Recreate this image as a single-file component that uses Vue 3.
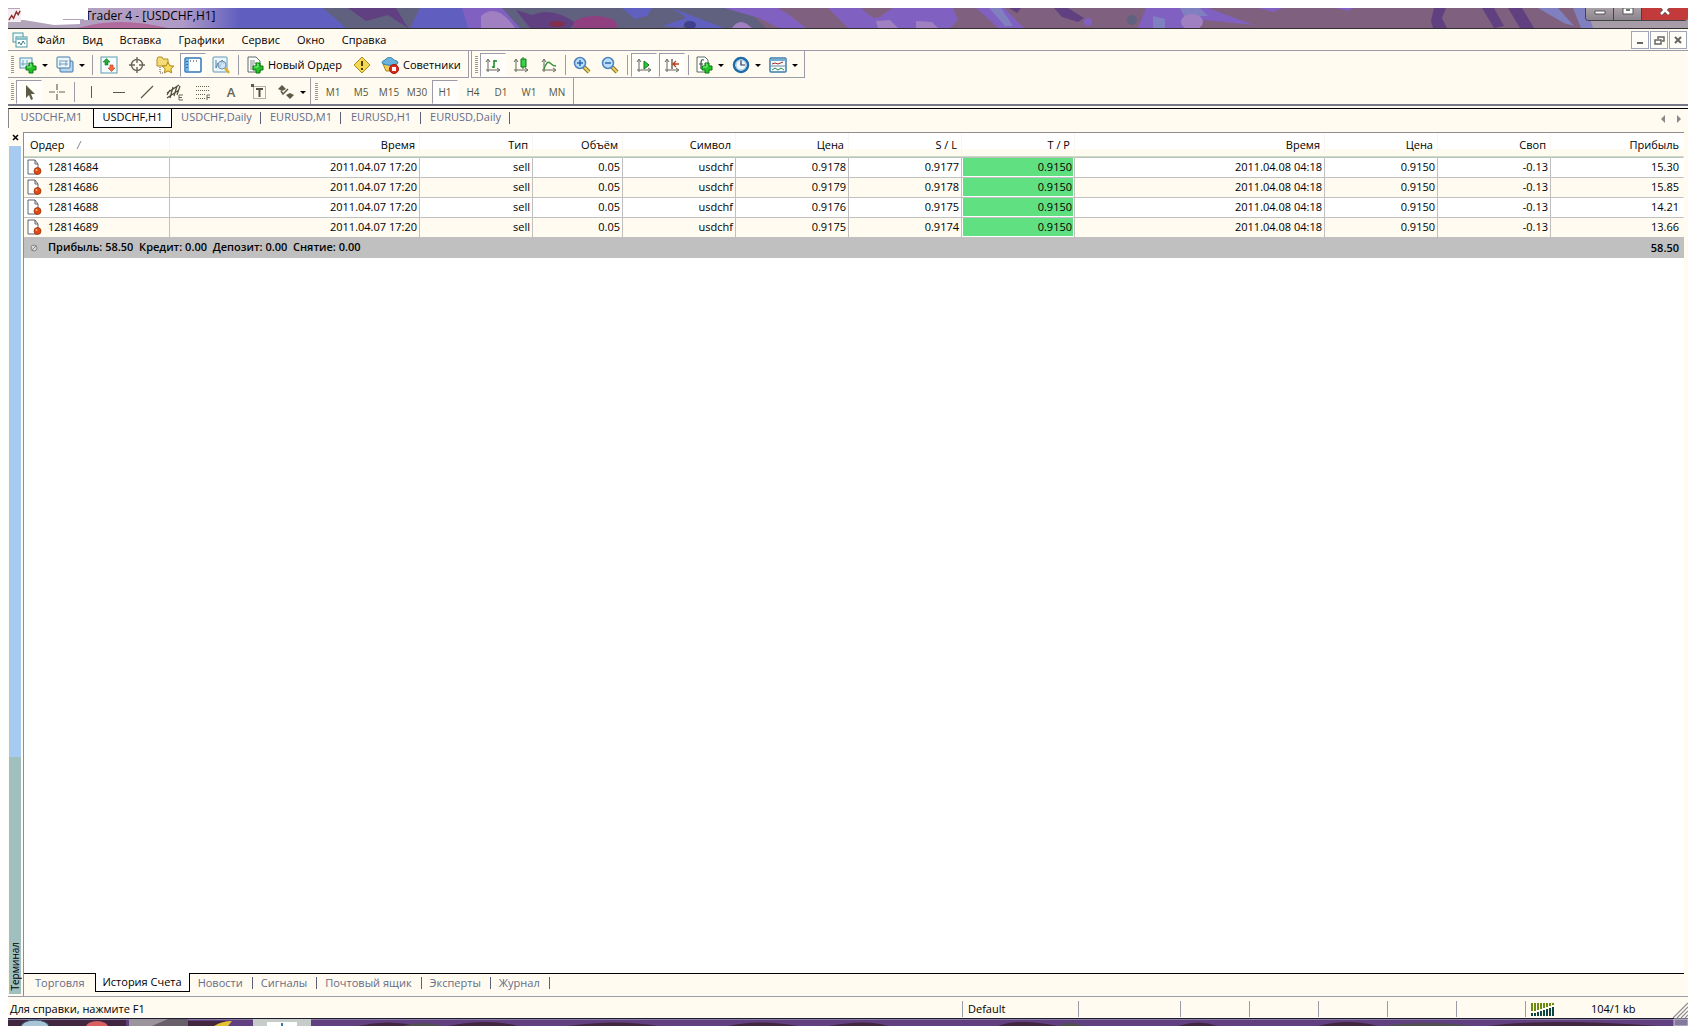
<script setup>
import { ref } from 'vue'

const menus = ['Файл', 'Вид', 'Вставка', 'Графики', 'Сервис', 'Окно', 'Справка']

const plus = '<path d="M10 7h4v3h3v4h-3v3h-4v-3H7v-4h3z" fill="#25c22b" stroke="#08780f"/><path d="M11 8h1v3H8" fill="none" stroke="#8df08d"/>'
const axes = '<path d="M4 16V4M2 6l2-3 2 3M2 14h13M13 12l3 2-3 2" fill="none" stroke="#66665a"/>'
const lens = '<path d="M11 11l5 5" stroke="#8e7424" stroke-width="4"/><path d="M11 11l5 5" stroke="#ead063" stroke-width="2"/><circle cx="7" cy="7" r="5.5" fill="#b9dcf8" stroke="#4b83bd" stroke-width="1.5"/>'

const icons = {
  newChart: '<rect x="1" y="2" width="12" height="10" fill="#eaf5fc" stroke="#4c8fb4"/><path d="M4 4v6M2 8h8M8 4v4" fill="none" stroke="#6aa3c2"/>' + plus,
  profiles: '<rect x="4" y="5" width="13" height="11" rx="1" fill="#b8d6ec" stroke="#4379a8"/><rect x="1" y="1" width="13" height="11" rx="1" fill="#edf6fc" stroke="#4379a8"/><path d="M4 4v6M3 8h9M10 5v5M5 5h7" fill="none" stroke="#6f9dbd"/>',
  market: '<rect x="1" y="1" width="16" height="16" fill="#f6fbfd" stroke="#5a9bb4"/><path d="M6.500 2.500l3.500 3.500H8V9H5V6H3z" fill="#24ad35" stroke="#0f7a1c" stroke-width=".6"/><path d="M11.500 15.500l-3.500-3.500h2V9h3v3h2z" fill="#f06c3c" stroke="#b33c14" stroke-width=".6"/>',
  target: '<circle cx="9" cy="9" r="5.500" fill="none" stroke="#66665a" stroke-width="1.400"/><path d="M9 1v6M9 11v6M1 9h6M11 9h6" stroke="#66665a" stroke-width="1.400"/>',
  navigator: '<path d="M1 3l1-2h4l1 2h5v7H1z" fill="#f5dc78" stroke="#b08e28"/><path d="M4 11v6h4" fill="none" stroke="#555" stroke-dasharray="1 1"/><path d="M12 6l1.800 3.700 4 .4-3 2.800.9 4-3.700-2-3.700 2 .9-4-3-2.800 4-.4z" fill="#fbdc5a" stroke="#a88420"/>',
  terminal: '<rect x="1" y="2" width="16" height="14" rx="1" fill="#fff" stroke="#2f75b5" stroke-width="1.500"/><path d="M2 3h3v12H2z" fill="#77b4ea"/><path d="M3 5v1M3 8v1M3 11v1M6 5h1M9 5h1M12 5h1" stroke="#1b2c44"/>',
  tester: '<rect x="1" y="1" width="14" height="15" rx="1" fill="#eef6fb" stroke="#5b98ba"/><path d="M4 4v8l2-5 2 4 2-7 2 4" fill="none" stroke="#5280a0"/><circle cx="10" cy="9" r="4" fill="#c6e0f3" fill-opacity=".7" stroke="#6b92b5"/><path d="M13 12l4 5" stroke="#d9ae28" stroke-width="2.500"/>',
  order: '<path d="M2 1h8l4 4v11H2z" fill="#fff" stroke="#5d6a68"/><path d="M4 5h5M4 7h7M4 9h4M4 11h3M4 13h3" stroke="#7c8a86"/>' + plus,
  warning: '<path d="M9 1l8 8-8 8-8-8z" fill="#f3d850" stroke="#a88a1c" stroke-linejoin="round"/><path d="M9 5v5M9 12v2" stroke="#4a3d0c" stroke-width="2"/>',
  experts: '<path d="M2 8h14l-3 7H5z" fill="#f3cd58" stroke="#a98320"/><path d="M1 7c0-3 3-2 4-4s6-2 7 0 5 1 5 4c-4 3-12 3-16 0z" fill="#68b3de" stroke="#347da8"/><circle cx="13" cy="13" r="4.500" fill="#dd2a1e" stroke="#a3140c"/><path d="M11 11h4v4h-4z" fill="#fff"/>',
  bars: axes + '<path d="M10 4v8M8 11h2M10 5h3" fill="none" stroke="#138a1f" stroke-width="1.500"/>',
  candles: axes + '<path d="M11 1v12" stroke="#0f7518"/><path d="M9 3h5v8H9z" fill="#3bd045" stroke="#0f7518"/>',
  line: axes + '<path d="M4 13c2-6 4-8 6-6s3 3 6 3" fill="none" stroke="#2a9135" stroke-width="1.300"/>',
  zoomIn: lens + '<path d="M4 7h6M7 4v6" stroke="#2a68ad" stroke-width="1.500"/>',
  zoomOut: lens + '<path d="M4 7h6" stroke="#2a68ad" stroke-width="1.500"/>',
  scroll: axes + '<path d="M9 5l5 4-5 4z" fill="#2fc43a" stroke="#0f7518"/>',
  shift: axes + '<path d="M9 3v10" stroke="#66665a" stroke-width="1.500"/><path d="M10 8h6M13 5l-3 3 3 3" fill="none" stroke="#c03a18" stroke-width="1.300"/>',
  indicators: '<path d="M2 1h8l3 3v12H2z" fill="#fff" stroke="#5d6a68"/><path d="M9 4c-3-1-3 1-3 4v5M4 8h4" fill="none" stroke="#3b4a3e" stroke-width="1.200"/>' + plus,
  periods: '<circle cx="9" cy="9" r="7" fill="#eef7fd" stroke="#1e6aa4" stroke-width="2.500"/><path d="M9 4v5h4" fill="none" stroke="#335" stroke-width="1.200"/><circle cx="9" cy="9" r="5" fill="none" stroke="#9bc4e0"/>',
  templates: '<rect x="1" y="2" width="16" height="14" rx="1" fill="#f5fafc" stroke="#3d7eac" stroke-width="1.500"/><path d="M1 4h16" stroke="#75add2" stroke-width="2"/><path d="M3 8l3-1 3 1 5-2" fill="none" stroke="#9c2e24"/><path d="M2 10h14" stroke="#6d8ba0"/><path d="M3 14l3-2 3 2 3-2 3 2" fill="none" stroke="#2b8a4c"/>',
  cursor: '<path d="M6 2v13l3-3 2 5 2-1-2-5h4z" fill="#5c5c46"/>',
  cross: '<path d="M9 1v6M9 11v6M1 9h6M11 9h6" stroke="#66664f" stroke-width="1.200"/><path d="M9 8.500h1v1H9z" fill="#66664f"/>',
  vline: '<path d="M9.500 3v12" stroke="#5c5c46"/>',
  hline: '<path d="M3 9.500h12" stroke="#5c5c46"/>',
  trend: '<path d="M3 15L15 3" stroke="#5c5c46" stroke-width="1.200"/>',
  channel: '<path d="M1 10L13 2M1 15L13 7M4 15L7 4M8 13l3-10M1 12l3-5M11 12l3-9" stroke="#4c4c38" stroke-width="1.200"/><path d="M17 12h-4v5h4M13 14.500h3" fill="none" stroke="#66664f"/>',
  fibo: '<path d="M2 3.500h14M2 7.500h14M2 11.500h9M2 15.500h9" stroke="#66664f" stroke-dasharray="1 1"/><path d="M16 12h-3v5M13 14.500h3" fill="none" stroke="#66664f"/>',
  label: '<rect x="3.500" y="3.500" width="12" height="12" fill="none" stroke="#66664f" stroke-dasharray="1 1"/><path d="M6 6h7M9.500 6v8" stroke="#4f4f42" stroke-width="2"/><path d="M1 1h3v3H1z" fill="#5c5c46"/>',
  arrows: '<path d="M5 2l4 4-4 2-4-2zM13 10l4 2-4 4-4-4z" fill="#5c5c46"/><path d="M4 8l2 3 5-5" fill="none" stroke="#5c5c46" stroke-width="1.500"/>',
}

const mainBar = [
  { icon: 'newChart', drop: true, name: 'Новый график' }, { icon: 'profiles', drop: true, name: 'Профили' }, { sep: true },
  { icon: 'market', name: 'Обзор рынка' }, { icon: 'target', name: 'Окно данных' }, { icon: 'navigator', name: 'Навигатор' },
  { icon: 'terminal', on: true, name: 'Терминал' }, { icon: 'tester', name: 'Тестер' }, { sep: true },
  { icon: 'order', text: 'Новый Ордер', size: 'wide' }, { icon: 'warning', name: 'Редактор' }, { icon: 'experts', text: 'Советники', size: 'mid' },
]
const chartBar = [
  { icon: 'bars', on: true, name: 'Бары' }, { icon: 'candles', name: 'Свечи' }, { icon: 'line', name: 'Линия' }, { sep: true, tight: true },
  { icon: 'zoomIn', name: 'Увеличить' }, { icon: 'zoomOut', name: 'Уменьшить' }, { sep: true },
  { icon: 'scroll', on: true, name: 'Автопрокрутка' }, { icon: 'shift', on: true, name: 'Сдвиг графика' }, { sep: true, tight: true },
  { icon: 'indicators', drop: true, name: 'Индикаторы' }, { icon: 'periods', drop: true, name: 'Периоды' }, { icon: 'templates', drop: true, name: 'Шаблоны' },
]
const drawBar = [
  { icon: 'cursor', on: true, name: 'Курсор' }, { icon: 'cross', name: 'Перекрестие' }, { sep: true },
  { icon: 'vline', name: 'Вертикальная линия' }, { icon: 'hline', name: 'Горизонтальная линия' }, { icon: 'trend', name: 'Трендовая линия' },
  { icon: 'channel', name: 'Канал' }, { icon: 'fibo', name: 'Фибоначчи' }, { text: 'A', size: 'letter' }, { icon: 'label', name: 'Метка' },
  { icon: 'arrows', drop: true, name: 'Стрелки' },
]
const periodBar = ['M1', 'M5', 'M15', 'M30', 'H1', 'H4', 'D1', 'W1', 'MN'].map((text) => ({ text, size: 'period', on: text === 'H1' }))
const toolRows = [[mainBar, chartBar], [drawBar, periodBar]]

const chartTabs = ['USDCHF,M1', 'USDCHF,H1', 'USDCHF,Daily', 'EURUSD,M1', 'EURUSD,H1', 'EURUSD,Daily']
const activeChart = ref('USDCHF,H1')
const panelTabs = ['Торговля', 'История Счета', 'Новости', 'Сигналы', 'Почтовый ящик', 'Эксперты', 'Журнал']
const activePanel = ref('История Счета')

const columns = ['Ордер', 'Время', 'Тип', 'Объём', 'Символ', 'Цена', 'S / L', 'T / P', 'Время', 'Цена', 'Своп', 'Прибыль']
const sizes = ['order', 'time', 'std', 'vol', 'std', 'std', 'std', 'std', 'time', 'std', 'std', 'rest']
const opened = '2011.04.07 17:20'
const closed = '2011.04.08 04:18'
const orders = [
  ['12814684', opened, 'sell', '0.05', 'usdchf', '0.9178', '0.9177', '0.9150', closed, '0.9150', '-0.13', '15.30'],
  ['12814686', opened, 'sell', '0.05', 'usdchf', '0.9179', '0.9178', '0.9150', closed, '0.9150', '-0.13', '15.85'],
  ['12814688', opened, 'sell', '0.05', 'usdchf', '0.9176', '0.9175', '0.9150', closed, '0.9150', '-0.13', '14.21'],
  ['12814689', opened, 'sell', '0.05', 'usdchf', '0.9175', '0.9174', '0.9150', closed, '0.9150', '-0.13', '13.66'],
]
</script>

<template>
  <div class="window">
    <header class="title">
      <svg class="glass" viewBox="0 0 1680 20" preserveAspectRatio="none" aria-hidden="true">
        <defs>
          <linearGradient id="g" x1="0" x2="1"><stop offset="0" stop-color="#b3a6b8" /><stop offset=".75" stop-color="#b09ac8" /><stop offset="1" stop-color="#605fc0" /></linearGradient>
        </defs>
        <rect width="1680" height="20" fill="#80607f" />
        <rect width="480" height="20" fill="#605fc0" />
        <rect width="232" height="20" fill="url(#g)" />
        <path d="M70 20q40-12 90 0z" fill="#b06a9c" />
        <path d="M315 0h97l-10 20h-64z" fill="#60607f" />
        <path d="M340 0h48l12 20-20-13-22 6z" fill="#604080" />
        <path d="M468 0h270l20 20H465z" fill="#60607f" />
        <path d="M454 0h40l18 20h-52z" fill="#8060c0" />
        <path d="M473 20V8q16-14 34 12z" fill="#a080c0" />
        <path d="M508 2l16 5q20-9 44 8l-6 5h-40z" fill="#604080" />
        <ellipse cx="587" cy="17" rx="22" ry="9" fill="#904080" />
        <ellipse cx="549" cy="16" rx="8" ry="3" fill="#80304c" />
        <path d="M614 0h30l-5 8-12 3zM655 18l28-10-10 12zM664 0l52 20h-30l-10-12z" fill="#6060c0" />
        <ellipse cx="682" cy="17" rx="6" ry="4" fill="#40408f" />
        <path d="M716 0h110l40 20h-95l-20-10z" fill="#8060c0" />
        <path d="M724 20q8-12 20 0z" fill="#a080c0" />
        <path d="M770 0h50l20 20h-42l-18-14z" fill="#80607f" />
        <path d="M822 0h34l16 8 13-8h60l5 12-8 8H846z" fill="#8060c0" />
        <path d="M853 0h20v9l-8 1z" fill="#80607f" />
        <path d="M868 13l14-1 8 8h-20zM908 13l16 1 6 6h-22z" fill="#a080c0" />
        <path d="M968 0h28l20 20h-26z" fill="#8060c0" />
        <path d="M981 0h12l12 18h-8z" fill="#8080c0" />
        <path d="M1001 0h12l-4 5zM1046 0h14l16 10-6 4-16-5z" fill="#604080" />
        <circle cx="1080" cy="14" r="4" fill="#8060c0" />
        <circle cx="1124" cy="12" r="5" fill="#60607f" />
        <path d="M1130 20l8-20h62l46 17-50-5-12 8z" fill="#8060c0" />
        <path d="M1145 8l12 3v9h-12zM1172 0h20l8 8h-24z" fill="#8080c0" />
        <ellipse cx="1184" cy="14" rx="11" ry="8" fill="#a080c0" />
        <path d="M1250 0h24l-8 4zM1328 0h18l-6 3z" fill="#8060c0" />
        <path d="M1426 0h12l-4 10 5 10h-14l-2-7zM1474 0h12l10 18-10 2zM1500 0h14l12 20h-14z" fill="#604080" />
        <path d="M1530 0h20l16 18-10-3zM1565 0h20v20h-12z" fill="#8080c0" />
        <path d="M1580 4h100v16h-95z" fill="#a69da9" />
        <path d="M12 0h68v11H55v1H12zM16 12h56v4l-26 1z" fill="#fff" />
      </svg>
      <svg class="logo" viewBox="0 0 14 14" aria-hidden="true"><path d="M0 0h14v14H0z" fill="#f4eef2" /><path d="M1 12l3-5 2 3 3-7 2 3 2-4" fill="none" stroke="#8a2a28" stroke-width="1.500" /></svg>
      <span class="caption">Trader 4 - [USDCHF,H1]</span>
      <svg class="patch" viewBox="0 0 6 12" aria-hidden="true"><path d="M0 0h4v12H0z" fill="#fff" /></svg>
      <div class="frame">
        <button aria-label="Свернуть"><svg viewBox="0 0 14 10"><path d="M2 3h10v3H2z" fill="#fff" stroke="#555" /></svg></button>
        <button aria-label="Развернуть"><svg viewBox="0 0 14 10"><path d="M2 0h10v6H2z" fill="#fff" stroke="#555" /><path d="M5 1h4v2H5z" fill="#6a7a70" /></svg></button>
        <button class="shut" aria-label="Закрыть"><svg viewBox="0 0 14 10"><path d="M3-2l8 8M11-2L3 6" stroke="#555" stroke-width="4" /><path d="M3-2l8 8M11-2L3 6" stroke="#fff" stroke-width="2.500" /></svg></button>
      </div>
    </header>

    <nav class="menu">
      <svg class="app" viewBox="0 0 16 16" aria-hidden="true"><rect x="1" y="1" width="10" height="9" fill="#eef8f8" stroke="#4a98a4" /><rect x="4" y="5" width="11" height="10" fill="#fff" stroke="#4a98a4" /><path d="M4 7h11" stroke="#8ac0c8" stroke-width="2" /><path d="M6 12l1-2 2 3 2-4 2 3" fill="none" stroke="#387f80" /></svg>
      <button v-for="m in menus" :key="m">{{ m }}</button>
      <span class="mdi">
        <button aria-label="Свернуть окно"><svg viewBox="0 0 16 16"><path d="M5 11h6" stroke="#666" stroke-width="2" /></svg></button>
        <button aria-label="Восстановить окно"><svg viewBox="0 0 16 16"><path d="M7 7V5h6v4h-2M4 8h6v4H4z" fill="none" stroke="#666" stroke-width="1.500" /></svg></button>
        <button aria-label="Закрыть окно"><svg viewBox="0 0 16 16"><path d="M5 5l6 6M11 5l-6 6" stroke="#666" stroke-width="2" /></svg></button>
      </span>
    </nav>

    <div v-for="(row, r) in toolRows" :key="r" class="toolrow">
      <div v-for="(bar, b) in row" :key="b" class="toolbar" role="toolbar">
        <i class="grip"></i>
        <template v-for="(t, i) in bar" :key="i">
          <i v-if="t.sep" class="sep" :class="{ tight: t.tight }"></i>
          <button v-else :class="[t.size, { on: t.on, drop: t.drop }]" :aria-label="t.text || t.name">
            <svg v-if="t.icon" viewBox="0 0 18 18" aria-hidden="true" v-html="icons[t.icon]"></svg>
            <span v-if="t.text">{{ t.text }}</span>
          </button>
        </template>
      </div>
    </div>

    <div class="tabs charts">
      <button v-for="t in chartTabs" :key="t" :class="{ active: t === activeChart }" @click="activeChart = t">{{ t }}</button>
      <span class="scroll">
        <button aria-label="Назад"><svg viewBox="0 0 6 8"><path d="M5 0v8L1 4z" fill="#888" /></svg></button>
        <button aria-label="Вперёд"><svg viewBox="0 0 6 8"><path d="M1 0v8l4-4z" fill="#888" /></svg></button>
      </span>
    </div>

    <main class="terminal">
      <aside class="side">
        <button class="close" aria-label="Закрыть панель"><svg viewBox="0 0 8 8"><path d="M1 1l5 5M6 1L1 6" stroke="#000" stroke-width="1.500" /></svg></button>
        <div class="blue"></div>
        <div class="teal"><span>Терминал</span></div>
      </aside>
      <section class="panel">
        <div class="sheet">
          <table>
            <colgroup><col v-for="(s, i) in sizes" :key="i" :class="s" /></colgroup>
            <thead>
              <tr><th v-for="(c, i) in columns" :key="i" scope="col">{{ c }}<svg v-if="i === 0" class="sort" viewBox="0 0 6 8"><path d="M1 8l4-8" stroke="#888" /></svg></th></tr>
            </thead>
            <tbody>
              <tr v-for="o in orders" :key="o[0]">
                <td v-for="(v, i) in o" :key="i" :class="{ hit: i === 7 }">
                  <svg v-if="i === 0" class="doc" viewBox="0 0 16 16" aria-hidden="true"><path d="M2 1h7l3 4v10H2z" fill="#fff" stroke="#62626c" /><path d="M9 1v4h3" fill="none" stroke="#62626c" /><circle cx="11.500" cy="12" r="3.500" fill="#e04a10" stroke="#8e2c08" stroke-width=".7" /><circle cx="10.500" cy="11" r="1" fill="#f9b08c" /></svg>
                  <span>{{ v }}</span>
                </td>
              </tr>
            </tbody>
            <tfoot>
              <tr>
                <td colspan="11"><svg class="doc" viewBox="0 0 16 16" aria-hidden="true"><circle cx="8" cy="8" r="3" fill="#d8d8d8" stroke="#858585" /><path d="M6 10l4-4" stroke="#858585" /></svg><span>Прибыль: 58.50&nbsp; Кредит: 0.00&nbsp; Депозит: 0.00&nbsp; Снятие: 0.00</span></td>
                <td>58.50</td>
              </tr>
            </tfoot>
          </table>
        </div>
        <div class="tabs pages">
          <button v-for="t in panelTabs" :key="t" :class="{ active: t === activePanel }" @click="activePanel = t">{{ t }}</button>
        </div>
      </section>
    </main>

    <footer class="status">
      <span class="help">Для справки, нажмите F1</span>
      <span class="cell profile">Default</span>
      <span class="cell wide"></span>
      <span v-for="n in 5" :key="n" class="cell"></span>
      <span class="cell net">
        <svg viewBox="0 0 24 13" aria-hidden="true">
          <g fill="#6a8a10"><path d="M0 0h2v8H0zM3 0h2v8H3zM6 0h2v7H6zM9 0h2v6H9zM12 0h2v5h-2zM15 0h2v4h-2zM18 0h2v3h-2zM21 0h2v2h-2z" /></g>
          <g fill="#0e4444"><path d="M0 10h2v3H0zM3 10h2v3H3zM6 9h2v4H6zM9 8h2v5H9zM12 7h2v6h-2zM15 6h2v7h-2zM18 5h2v8h-2zM21 4h2v9h-2z" /></g>
        </svg>
        104/1 kb
      </span>
      <svg class="resize" viewBox="0 0 16 16" aria-hidden="true"><path d="M1 16L16 1M5 16L16 5M9 16l7-7M13 16l3-3" stroke="#8a8a90" stroke-width="1.200" /></svg>
    </footer>

    <svg class="taskbar" viewBox="0 0 1680 8" preserveAspectRatio="none" aria-hidden="true">
      <rect width="1680" height="8" fill="#604080" />
      <path d="M0 2h118v6H0zM178 3h40v5h-40zM350 8q30-7 60 0zM440 8q40-8 70 0zM560 8q50-7 90 0zM720 8q30-7 70 0zM820 8q40-7 60 0zM990 8q20-8 60 0zM1170 8q20-7 40 0zM1310 8q30-8 60 0zM1480 8q60-8 170 0z" fill="#40263f" />
      <path d="M395 8q20-6 40 0zM1050 8q10-6 26 0zM1375 8q40-6 90 0z" fill="#505050" />
      <path d="M0 0h1680v1H0z" fill="#1c1c30" />
      <path d="M0 1h1680v1H0z" fill="#8d7ca0" />
      <ellipse cx="27" cy="9" rx="14" ry="7" fill="#a9c4d4" stroke="#3a5a78" />
      <ellipse cx="89" cy="9" rx="11" ry="6" fill="#d86060" />
      <path d="M121 1h59v7h-59z" fill="#9c949c" /><path d="M160 1h20v7h-36z" fill="#686068" />
      <path d="M206 8q8-5 18-5l-4 5z" fill="#e4c234" />
      <path d="M245 1h58v7h-58z" fill="#c6ccc8" /><path d="M259 4h30v4h-30z" fill="#fff" /><path d="M273 5h2v3h-2z" fill="#3878a0" />
      <path d="M1666 1h14v7h-14z" fill="#84789c" stroke="#d0c8dc" />
    </svg>
  </div>
</template>

<style>
body { margin: 0; background: #fff; }
</style>

<style scoped>
.window { box-sizing: border-box; min-height: 100vh; padding: 8px 8px 0; display: flex; flex-direction: column; font: 11px/16px "Open Sans", "Noto Sans", sans-serif; color: #000; background: linear-gradient(#fffbf0, #fffbf0) content-box; }
button { box-sizing: border-box; margin: 0; padding: 0; border: 0; background: none; font: inherit; color: inherit; border-radius: 0; }
svg { display: block; flex: none; }

.title { position: relative; display: flex; height: 20px; border-bottom: 1px solid #303030; }
.glass { position: absolute; inset: 0; width: 100%; height: 20px; }
.logo { position: relative; width: 13px; height: 13px; margin-top: 1px; }
.caption { position: relative; margin-left: 64px; font-size: 12px; line-height: 16px; }
.patch { position: absolute; left: 76px; top: 0; width: 6px; height: 12px; }
.frame { position: relative; display: flex; margin-left: auto; height: 12px; overflow: hidden; border: solid #444; border-width: 0 0 1px 1px; border-radius: 0 0 4px 4px; }
.frame button { width: 28px; border-right: 1px solid #444; background: linear-gradient(#aaa0a8, #8c848c); display: flex; justify-content: center; }
.frame .shut { width: 46px; border: 0; background: #c33a3a; }
.frame svg { width: 14px; height: 10px; }

.menu { display: flex; align-items: center; height: 22px; box-sizing: border-box; border-bottom: 1px solid #9c9ca8; }
.app { width: 16px; height: 16px; margin: 0 9px 0 4px; }
.menu > button { margin-right: 17px; }
.mdi { display: flex; gap: 1px; margin-left: auto; padding-right: 1px; }
.mdi button { width: 18px; height: 18px; border: 1px solid #a0a4b8; background: #fffdf8; }
.mdi svg { width: 16px; height: 16px; }

.toolrow { display: flex; height: 27px; }
.toolrow:nth-of-type(2) { height: 26px; border-bottom: 2px solid #77778a; }
.toolbar { display: flex; align-items: center; gap: 2px; box-sizing: border-box; border-right: 1px solid #9c9ca8; border-bottom: 1px solid #9c9ca8; padding: 2px 1px 0 0; }
.toolbar + .toolbar { margin-left: 2px; padding-right: 3px; border-left: 1px solid #9c9ca8; }
.toolrow:nth-of-type(2) .toolbar { border-bottom: 0; }
.toolrow:nth-of-type(2) .toolbar + .toolbar { border-left: 0; margin-left: 1px; }
.grip { width: 3px; height: 18px; margin: 0 0 0 3px; background: repeating-linear-gradient(#999 0 1px, transparent 1px 2px); }
.sep { width: 1px; height: 20px; margin: 0 1px 0 2px; background: #9c9ca8; }
.sep.tight { margin-left: 1px; }
.toolbar button { width: 26px; height: 24px; display: flex; align-items: center; justify-content: center; border: 1px solid transparent; }
.toolbar svg { width: 18px; height: 18px; }
.toolbar button.on { background: #fffefa; border-color: #9c9ca8 transparent transparent #9c9ca8; }
.toolbar button.drop { width: 35px; justify-content: flex-start; gap: 5px; padding-left: 2px; }
.toolbar button.drop::after { content: ""; border: solid transparent; border-width: 3px 3px 0; border-top-color: #000; }
.toolbar .wide, .toolbar .mid { justify-content: flex-start; gap: 4px; padding-left: 3px; }
.toolbar button.wide { width: 105px; }
.toolbar button.mid { width: 90px; }
.toolbar .period { font-size: 10px; color: #55553c; }
.toolbar .letter { font-size: 13px; font-weight: 600; color: #66664f; }

.tabs { display: flex; box-sizing: border-box; color: #666b88; }
.tabs button { position: relative; height: 19px; padding-bottom: 3px; }
.tabs button:not(.active)::after { content: ""; position: absolute; right: 0; top: 3px; height: 12px; border-right: 1px solid #5c6078; }
.tabs button:first-child::after { display: none; }
.tabs .active { color: #000; background: #fff; border: 1px solid #000; border-top: 0; padding-bottom: 2px; }
.charts { height: 20px; margin-top: 2px; border-top: 1px solid #000; border-left: 1px solid #888; }
.charts > button { width: 80px; }
.charts > button:first-child { width: 84px; padding-left: 1px; }
.charts > button:nth-child(2) { width: 79px; }
.charts > button:nth-child(3) { width: 89px; }
.charts > button:nth-child(6) { width: 89px; }
.charts > .scroll { display: flex; gap: 10px; align-items: center; margin-left: auto; padding-right: 6px; }
.scroll button::after { display: none; }
.scroll button { width: 6px; height: 8px; padding: 0; }
.tabs .scroll button::after { display: none; }
.tabs .scroll button { height: 10px; padding: 0; }
.scroll svg { width: 6px; height: 8px; }

.terminal { flex: 1; display: flex; }
.side { width: 15px; display: flex; flex-direction: column; padding: 2px 2px 2px 0; box-sizing: border-box; }
.close { height: 16px; padding: 0 0 0 4px; }
.close svg { width: 8px; height: 8px; }
.blue { flex: 72; background: #a6caf0; margin-left: 1px; }
.teal { flex: 28; background: #a0c0c0; margin-left: 1px; display: flex; align-items: flex-end; justify-content: center; }
.teal span { writing-mode: vertical-rl; transform: rotate(180deg); font-size: 10px; line-height: 12px; padding-top: 3px; }
.panel { flex: 1; min-width: 0; display: flex; flex-direction: column; margin-top: 4px; border-left: 1px solid #908c90; }
.sheet { flex: 1; background: #fff; margin-right: 4px; border-top: 1px solid #908c90; }
table { width: 100%; table-layout: fixed; border-collapse: separate; border-spacing: 0; }
.order { width: 146px; }
.time { width: 250px; }
.std { width: 113px; }
.vol { width: 90px; }
th { position: relative; box-sizing: border-box; height: 24px; padding: 1px 4px 0 0; font-weight: 400; text-align: right; border-bottom: 1px solid #c6dcc0; background: linear-gradient(#fff 70%, #fffbf0 70%); border-right: 1px solid #f8f6f0; }
th:first-child { text-align: left; padding-left: 6px; }
.sort { display: inline-block; width: 6px; height: 8px; margin-left: 11px; }
td { box-sizing: border-box; height: 20px; padding: 0 2px 2px 0; text-align: right; border-top: 1px solid #c0c0c0; border-right: 1px solid #c0c0c0; line-height: 17px; }
td:last-child, th:last-child { border-right-color: transparent; padding-right: 4px; }
tbody tr:nth-child(even) { background: #fffbf0; }
tbody td:first-child { display: flex; align-items: center; gap: 6px; padding-left: 2px; text-align: left; }
tfoot td:first-child { padding-left: 2px; text-align: left; }
tfoot td:first-child svg { display: inline-block; vertical-align: middle; margin-right: 6px; }
.doc { width: 16px; height: 16px; }
td.hit { background: #60e080; box-shadow: inset 1px 0 #fff, inset -1px -1px #fff; }
tfoot td { background: #c0c0c0; font-weight: 600; }
.pages { height: 23px; border-top: 1px solid #000; margin-right: 4px; }
.pages button { padding: 0 10px 1px 8px; }
.pages button:first-child { padding: 0 11px 1px 11px; }
.pages .active { margin-top: -1px; height: 19px; padding: 0 7px 1px 6px; }

.status { position: relative; display: flex; align-items: center; height: 22px; box-sizing: border-box; border-top: 1px solid #9c9ca8; padding-top: 3px; }
.help { flex: 1; padding-left: 2px; }
.cell { box-sizing: border-box; width: 69px; height: 16px; padding-left: 5px; border-left: 1px solid #9c9ca8; white-space: nowrap; }
.profile { width: 116px; }
.cell.wide { width: 102px; }
.cell.net { width: 163px; display: flex; align-items: center; gap: 36px; }
.net svg { width: 24px; height: 13px; }
.resize { position: absolute; right: 0; bottom: 0; width: 16px; height: 16px; }
.taskbar { width: 100%; height: 8px; }
</style>
